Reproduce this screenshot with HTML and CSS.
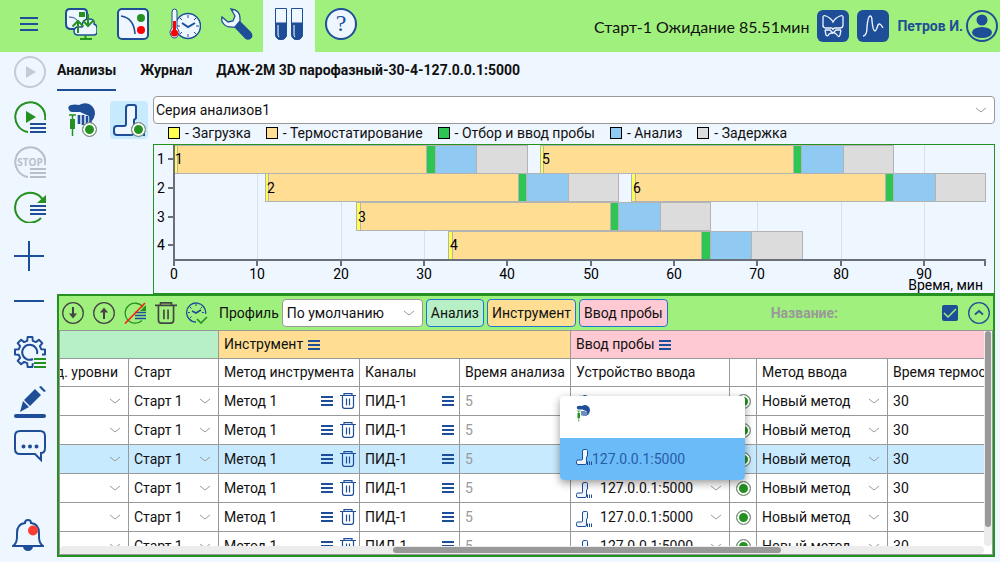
FILE: index.html
```html
<!DOCTYPE html>
<html lang="ru">

<head>
    <meta charset="UTF-8">
    <meta name="viewport" content="width=device-width, initial-scale=1.0">
    <title>Анализы</title>
    <link rel="stylesheet" href="styles.css">
</head>

<body>
    <svg class="sprite" aria-hidden="true">
        <symbol id="i-lines" viewBox="0 0 12 12">
            <path d="M0 2h12M0 6h12M0 10h12" stroke="currentColor" stroke-width="2" />
        </symbol>
        <symbol id="i-trash" viewBox="0 0 16 16">
            <path d="M0 2.500h16M4 2V.6h8V2M2.500 3v10q0 2.400 2 2.400h7q2 0 2-2.400V3M6.500 5.500v7M9.500 5.500v7" fill="none" stroke="currentColor" stroke-width="1.200" />
        </symbol>
        <symbol id="i-tower" viewBox="0 0 32 32">
            <path d="M13 20V4q0-3 3-3h5q2 0 2 2v11l-2 2v12q0 3-3 3H4q-3 0-3-3v-3q0-3 3-3h7q2 0 2-2z" fill="#eef6ff" stroke="#1f4e98" stroke-width="2" />
            <path d="M23 25v7M27 25v7M31 25v7" stroke="#1f4e98" stroke-width="2" />
        </symbol>
        <symbol id="i-hand" viewBox="0 0 30 34">
            <path d="M1 7q-2-4 2-5 4-1 8 0 5-3 10-1 6 3 6 10-1 5-3 7l-3-5-9-4H4q-2 0-3-2z" fill="#1f4e98" />
            <path d="M11 12v9M15 12v10M19 13v9M22.500 13v7" stroke="#1f4e98" stroke-width="2.600" />
            <path d="M1 12h7M4.500 12v4M4.500 25v8" stroke="#259121" stroke-width="1.500" />
            <path d="M2 16h5v10H2z" fill="#259121" />
        </symbol>
    </svg>

    <header class="topbar">
        <nav class="modes">
            <button class="mode" aria-label="Меню">
                <svg viewBox="0 0 32 32"><path d="M7 10h18M7 16h18M7 22h18" stroke="#1f4e98" stroke-width="2" /></svg>
            </button>
            <button class="mode" aria-label="Обмен">
                <svg viewBox="0 0 32 32" fill="none" stroke="#1f4e98" stroke-width="2">
                    <path d="M5 1h13q4 0 4 4v14q0 2-3 2H6q-5 0-5-5V5q0-4 4-4z" fill="#eef6ff" />
                    <path d="M4 9q7 0 9 5" stroke-width="1" />
                    <path d="M12 19h5q0-8 7-8 6 0 5 5 3 1 3 4v4q0 3-4 3H13q-4 0-4-4 0-3 3-4z" fill="#eef6ff" stroke-width="1.500" />
                    <path d="M14 4h6v5h-6z" fill="#259121" stroke="none" />
                    <path d="M13 25V13M7.500 18.500L13 13l5.500 5.500M23 6v12M18 12.500l5 5.500 5.500-5.500M20.500 27v4M15 31h12" stroke="#259121" />
                </svg>
            </button>
            <button class="mode" aria-label="Хроматограф">
                <svg viewBox="0 0 32 32">
                    <rect x="1" y="1" width="30" height="30" rx="4" fill="#eef6ff" stroke="#1f4e98" stroke-width="2" />
                    <path d="M4 8q13 2 14 18" fill="none" stroke="#1f4e98" stroke-width="1.600" />
                    <circle cx="24" cy="10" r="4" fill="#259121" /><circle cx="24" cy="22" r="4" fill="#f00" />
                </svg>
            </button>
            <button class="mode" aria-label="Температура">
                <svg viewBox="0 0 32 32" fill="none" stroke="#1f4e98">
                    <circle cx="19" cy="18" r="12.500" fill="#eef6ff" stroke-width="1.500" />
                    <path d="M19 7v3M19 26v3M8 18h3M27 18h3M11 10l2 2M27 10l-2 2M11 26l2-2M27 26l-2-2" />
                    <path d="M13 15l6 4 7-4" stroke-width="2" />
                    <path d="M3 20V4q0-3 2.500-3T8 4v16q2 2 2 4.500Q9 30 5.500 30T1 24.500Q1 22 3 20z" fill="#eef6ff" />
                    <circle cx="5.500" cy="25" r="3.500" fill="#f00" stroke="none" /><path d="M5.500 13v12" stroke="#f00" stroke-width="3" />
                </svg>
            </button>
            <button class="mode" aria-label="Настройка">
                <svg viewBox="0 0 32 32">
                    <path d="M19 13l11 11q3 4 0 6.500-3 2.500-6 0L13 19z" fill="#1f4e98" />
                    <path d="M10 1q9 1 9 9v3l-5 6q-9 1-12-4-2-2-1-6l6 5 5-1 2-5z" fill="#eef6ff" stroke="#1f4e98" stroke-width="1.300" />
                </svg>
            </button>
            <button class="mode mode-active" aria-label="Анализы">
                <svg viewBox="0 0 32 32" fill="#1f4e98" stroke="#1f4e98">
                    <path d="M2.500.5h11v25q0 6-5.500 6t-5.500-6zM18.500.5h11v25q0 6-5.500 6t-5.500-6z" fill="#eef6ff" />
                    <path d="M2.500 15h11v10.500q0 6-5.500 6t-5.500-6zM18.500 15h11v10.500q0 6-5.500 6t-5.500-6z" />
                    <path d="M5 17v9q0 2 1 3M21 17v9q0 2 1 3" fill="none" stroke="#fff" />
                </svg>
            </button>
            <button class="mode" aria-label="Справка">
                <svg viewBox="0 0 32 32">
                    <circle cx="16" cy="16" r="15" fill="#eef6ff" stroke="#1f4e98" stroke-width="2" />
                    <text class="help-mark" x="16" y="23" text-anchor="middle">?</text>
                </svg>
            </button>
        </nav>
        <span class="state">Старт-1 Ожидание 85.51мин</span>
        <button class="square" aria-label="Сигналы">
            <svg viewBox="0 0 32 32" fill="none" stroke="#eef6ff" stroke-width="1.300">
                <path d="M6 17V7q0-2 3-1 5 2 7 6 2-4 7-6 3-1 3 1v8q0 3-3 3h-5q-2 0-2 2 0-2-2-2H9q-3 0-3-3M8 20h5l3 3 3-3h5M8 20l1 5q2 2 3-1 4-2 4-1 2-1 4 2t3 0l1-5" />
            </svg>
        </button>
        <button class="square" aria-label="Хроматограмма">
            <svg viewBox="0 0 32 32" fill="none" stroke="#eef6ff" stroke-width="1.400"><path d="M6 26q4 0 4-9 1-11 3-11 2 0 2 5 1 10 3 10 1 0 3-6 2-3 5 3" /></svg>
        </button>
        <a class="user" href="#">Петров И.
            <svg viewBox="0 0 32 32"><circle cx="16" cy="16" r="15" fill="none" stroke="#1f4e98" stroke-width="2" /><circle cx="16" cy="10" r="5.500" fill="#1f4e98" /><ellipse cx="16" cy="22.500" rx="10" ry="5.500" fill="#1f4e98" /></svg>
        </a>
    </header>

    <div class="layout">
        <aside class="side">
            <button aria-label="Старт" disabled>
                <svg viewBox="0 0 32 32"><circle cx="16" cy="16" r="15" fill="none" stroke="#c5cad3" stroke-width="2" /><path d="M12 10l10 6-10 6z" fill="#c5cad3" /></svg>
            </button>
            <button aria-label="Старт серии">
                <svg viewBox="0 0 32 32"><path d="M14 31A15 15 0 1 1 31 19" fill="none" stroke="#259121" stroke-width="2" /><path d="M12 10l10 6-10 6z" fill="#259121" /><path d="M16 23h16M16 27h16M16 31h16" stroke="#1f4e98" stroke-width="2" /></svg>
            </button>
            <button aria-label="Стоп серии" disabled>
                <svg viewBox="0 0 32 32"><path d="M14 31A15 15 0 1 1 31 19" fill="none" stroke="#b9bfc9" stroke-width="2" /><text class="stop-text" x="16" y="20" text-anchor="middle">STOP</text><path d="M16 23h16M16 27h16M16 31h16" stroke="#b9bfc9" stroke-width="2" /></svg>
            </button>
            <button aria-label="Повтор серии">
                <svg viewBox="0 0 32 32"><path d="M27 27A15 15 0 1 1 29 9" fill="none" stroke="#259121" stroke-width="2" /><path d="M32 4v8h-9z" fill="#259121" /><path d="M16 15h16M16 19h16M16 23h16" stroke="#1f4e98" stroke-width="2" /></svg>
            </button>
            <button class="after-run" aria-label="Добавить">
                <svg viewBox="0 0 32 32"><path d="M0 16h30M15 1v30" stroke="#1f4e98" stroke-width="2" /></svg>
            </button>
            <button aria-label="Удалить">
                <svg viewBox="0 0 32 32"><path d="M0 16h30" stroke="#1f4e98" stroke-width="2" /></svg>
            </button>
            <button class="after-edit" aria-label="Параметры">
                <svg viewBox="0 0 32 32" fill="none" stroke="#1f4e98" stroke-width="2" stroke-linejoin="round">
                    <path d="M18.800 27.200L18.400 31h-4.800l-.4-3.800-3.100-1.300-3 2.400-3.400-3.400 2.400-3-1.300-3.100L1 18.400v-4.800l3.800-.4 1.300-3.100-2.400-3 3.400-3.400 3 2.400 3.100-1.300.4-3.800h4.800l.4 3.800 3.100 1.300 3-2.400 3.400 3.400-2.400 3 1.300 3.100 3.800.4v4.800h-3" />
                    <path d="M19 23a7.500 7.500 0 1 1 4-5" /><path d="M20 23h12M20 27h12M20 31h12" stroke="#259121" />
                </svg>
            </button>
            <button class="pencil" aria-label="Правка">
                <svg viewBox="0 0 32 32" fill="#1f4e98"><path d="M10 14L21 3l6 6-11 11zM9 15l6 6-9 5zM25 1l2-1 5 5-2 1z" /><path d="M2 30h28" stroke="#1f4e98" stroke-width="4" stroke-linecap="round" /></svg>
            </button>
            <button class="chat" aria-label="Сообщения">
                <svg viewBox="0 0 32 32" fill="none" stroke="#1f4e98" stroke-width="2"><path d="M6 1h20q5 0 5 5v12q0 5-4 5v7l-6-6H6q-5 0-5-5V6q0-5 5-5z" /><path d="M9.500 16.500h0M16 16.500h0M22.500 16.500h0" stroke-width="4" stroke-linecap="round" /></svg>
            </button>
            <button class="bell" aria-label="Уведомления">
                <svg viewBox="0 0 32 32"><path d="M1 27q4-3 4-9v-4q0-9 8-10 0-3 3-3t3 3q8 1 8 10v4q0 6 4 9z" fill="none" stroke="#1f4e98" stroke-width="2" /><path d="M11 28h10q-1 4-5 4t-5-4z" fill="#1f4e98" /><circle cx="21" cy="11.500" r="5" fill="#fb3e33" /></svg>
            </button>
        </aside>

        <main class="content">
            <nav class="tabs">
                <a class="tab tab-active" href="#">Анализы</a>
                <a class="tab" href="#">Журнал</a>
                <a class="tab" href="#">ДАЖ-2М 3D парофазный-30-4-127.0.0.1:5000</a>
            </nav>

            <section class="series">
                <div class="devices">
                    <button class="device" aria-label="Ручной ввод"><svg class="hand" viewBox="0 0 30 34"><use href="#i-hand" /></svg><span class="dot device-dot"></span></button>
                    <button class="device device-active" aria-label="Парофазный дозатор"><svg viewBox="0 0 32 32"><use href="#i-tower" /></svg><span class="dot device-dot"></span></button>
                </div>
                <div class="plan">
                    <select class="series-select" aria-label="Серия"><option>Серия анализов1</option></select>
                    <ul class="legend">
                        <li><i class="swatch load"></i>- Загрузка</li>
                        <li><i class="swatch thermo"></i>- Термостатирование</li>
                        <li><i class="swatch inject"></i>- Отбор и ввод пробы</li>
                        <li><i class="swatch analysis"></i>- Анализ</li>
                        <li><i class="swatch delay"></i>- Задержка</li>
                    </ul>
                    <svg class="chart" id="chart"></svg>
                </div>
            </section>

            <section class="panel">
                <div class="toolbar">
                    <button class="tool" aria-label="Вниз"><svg viewBox="0 0 22 22" fill="none" stroke="#444"><circle cx="11" cy="11" r="10.300" stroke-width="1.300" /><path d="M11 5v9" stroke-width="2" /><path d="M7 11.500h8l-4 5z" fill="#444" stroke="none" /></svg></button>
                    <button class="tool" aria-label="Вверх"><svg viewBox="0 0 22 22" fill="none" stroke="#444"><circle cx="11" cy="11" r="10.300" stroke-width="1.300" /><path d="M11 8v9" stroke-width="2" /><path d="M7 10.500h8l-4-5z" fill="#444" stroke="none" /></svg></button>
                    <button class="tool" aria-label="Отменить повтор"><svg viewBox="0 0 22 22" fill="none"><path d="M18 18.500A10 10 0 1 1 19 5" stroke="#259121" stroke-width="1.300" /><path d="M22 3v6h-6z" fill="#259121" /><path d="M11 10.500h11M11 13.500h11M11 16.500h11" stroke="#1f4e98" stroke-width="1.500" /><path d="M1 21.500L21 1" stroke="#f21" stroke-width="1.700" /></svg></button>
                    <button class="tool dark" aria-label="Удалить"><svg viewBox="0 0 16 16"><use href="#i-trash" /></svg></button>
                    <button class="tool" aria-label="Время"><svg viewBox="0 0 22 22" fill="none" stroke="#1f4e98"><path d="M10 20A9.500 9.500 0 1 1 19.500 12" stroke-width="1.300" /><path d="M10 2v2M2 10.500h2M16 10.500h2M4 5l1.500 1.500M16 5l-1.500 1.500M4 16l1.500-1.500" /><path d="M6 9l4 2 5-3" stroke-width="1.700" /><path d="M11 17l4 4 6-6" stroke="#259121" stroke-width="1.700" /></svg></button>
                    <label class="profile" for="profile">Профиль</label>
                    <select class="profile-select" id="profile"><option>По умолчанию</option></select>
                    <button class="chip analysis-chip">Анализ</button>
                    <button class="chip tool-chip">Инструмент</button>
                    <button class="chip inject-chip">Ввод пробы</button>
                    <label class="name-label" for="name">Название:</label>
                    <input class="name-input" id="name" type="text">
                    <input class="check" type="checkbox" aria-label="Показать" checked>
                    <button class="tool fold" aria-label="Свернуть"><svg viewBox="0 0 22 22" fill="none" stroke="#1f4e98"><circle cx="11" cy="11" r="10.300" stroke-width="1.300" /><path d="M7 12.500l4-3.500 4 3.500" stroke-width="1.700" /></svg></button>
                </div>
                <div class="grid">
                    <div class="viewport">
                        <table>
                            <colgroup>
                                <col class="c-level"><col class="c-start"><col class="c-method"><col class="c-channel"><col class="c-time"><col class="c-device"><col class="c-ready"><col class="c-input"><col class="c-rest">
                            </colgroup>
                            <thead>
                                <tr>
                                    <th class="g-analysis" colspan="2"></th>
                                    <th class="g-tool" colspan="3">Инструмент <svg class="lines"><use href="#i-lines" /></svg></th>
                                    <th class="g-inject" colspan="4">Ввод пробы <svg class="lines"><use href="#i-lines" /></svg></th>
                                </tr>
                                <tr>
                                    <th><div class="level-title">Град. уровни</div></th>
                                    <th>Старт</th>
                                    <th>Метод инструмента</th>
                                    <th>Каналы</th>
                                    <th>Время анализа</th>
                                    <th>Устройство ввода</th>
                                    <th></th>
                                    <th>Метод ввода</th>
                                    <th>Время термостатирования</th>
                                </tr>
                            </thead>
                            <tbody id="rows"></tbody>
                        </table>
                    </div>
                    <div class="vbar"><div class="vthumb"></div></div>
                    <div class="hbar"><div class="hthumb"></div></div>
                </div>
                <ul class="menu">
                    <li><button aria-label="Ручной ввод"><svg class="menu-hand" viewBox="0 0 30 34"><use href="#i-hand" /></svg></button></li>
                    <li><button class="chosen"><svg class="menu-tower" viewBox="0 0 32 32"><use href="#i-tower" /></svg>127.0.0.1:5000</button></li>
                </ul>
            </section>
        </main>
    </div>
    <script src="script.js"></script>
</body>

</html>
```

FILE: styles.css
```css
* {
    box-sizing: border-box;
}

body {
    margin: 0;
    height: 100vh;
    display: flex;
    flex-direction: column;
    overflow: hidden;
    background-color: #eef6ff;
    color: #111;
    font-family: Roboto, sans-serif;
    font-size: 14px;
}

button, select, input {
    font: inherit;
    color: inherit;
    margin: 0;
}
button {
    padding: 0;
    border: none;
    background: none;
    cursor: pointer;
}
a {
    color: inherit;
    text-decoration: none;
}
ul {
    list-style: none;
    margin: 0;
    padding: 0;
}
svg {
    display: block;
    flex-shrink: 0;
}
.sprite {
    position: absolute;
    width: 0;
    height: 0;
}

select {
    appearance: none;
    border: 1px solid #999;
    border-radius: 4px;
    background: #fff url("data:image/svg+xml,%3Csvg xmlns='http://www.w3.org/2000/svg' width='12' height='6'%3E%3Cpath d='M1 1l5 4 5-4' fill='none' stroke='%23999'/%3E%3C/svg%3E") no-repeat right 7px center;
}

/* header */
.topbar {
    display: flex;
    align-items: center;
    height: 52px;
    flex-shrink: 0;
    padding: 0 2px 0 3px;
    background-color: #a0f07d;
}
.modes {
    display: flex;
    margin-right: auto;
}
.mode {
    display: flex;
    align-items: center;
    justify-content: center;
    width: 52px;
    height: 52px;
    padding-bottom: 4px;
}
.mode svg {
    width: 32px;
    height: 32px;
}
.mode-active {
    background-color: #eef6ff;
}
.help-mark {
    font: 24px "Liberation Serif", serif;
    fill: #1f4e98;
}
.state {
    font-family: Lato, sans-serif;
    font-size: 16px;
    margin-right: 8px;
}
.square {
    width: 32px;
    height: 32px;
    border-radius: 6px;
    margin-right: 8px;
    background-color: #1f4e98;
}
.user {
    display: flex;
    align-items: center;
    gap: 3px;
    color: #1f4e98;
    font-weight: bold;
}
.user svg {
    width: 32px;
    height: 32px;
}

.layout {
    display: flex;
    flex: 1;
    min-height: 0;
}

/* left buttons */
.side {
    display: flex;
    flex-direction: column;
    align-items: center;
    gap: 13px;
    width: 57px;
    padding: 4px 0 11px 3px;
}
.side button {
    width: 32px;
    height: 32px;
}
.side svg {
    width: 32px;
    height: 32px;
}
.side .after-run {
    margin-top: 4px;
}
.side .after-edit {
    margin-top: 6px;
}
.side .pencil {
    margin-top: 5px;
}
.side .chat {
    margin-top: -1px;
}
.side .bell {
    margin: auto 4px 0 0;
}
.stop-text {
    font: bold 10px "Open Sans", sans-serif;
    fill: #b9bfc9;
}

.content {
    display: flex;
    flex-direction: column;
    flex: 1;
    min-width: 0;
    padding: 0 5px 5px 0;
}

.tabs {
    display: flex;
    gap: 24px;
    height: 39px;
    flex-shrink: 0;
    font-weight: bold;
}
.tab {
    line-height: 36px;
    border-bottom: 2px solid transparent;
}
.tab-active {
    border-color: #1f4e98;
}

/* series plan */
.series {
    display: flex;
    padding-top: 5px;
}
.devices {
    display: flex;
    gap: 15px;
    width: 96px;
    padding-top: 5px;
    flex-shrink: 0;
}
.device {
    position: relative;
    display: flex;
    align-items: center;
    justify-content: center;
    width: 38px;
    height: 38px;
    border-radius: 4px;
}
.device svg {
    width: 32px;
    height: 32px;
}
.device .hand {
    width: 30px;
    height: 34px;
    margin-left: 14px;
}
.device-active {
    background-color: #c8eafe;
}
.dot {
    display: block;
    width: 15px;
    height: 15px;
    border: 1px solid #888;
    border-radius: 50%;
    background-color: #259121;
    box-shadow: inset 0 0 0 2px #fff;
}
.device-dot {
    position: absolute;
    right: 2px;
    bottom: 2px;
    box-shadow: inset 0 0 0 2px #fff;
}
.device:first-child .device-dot {
    right: -2px;
}
.plan {
    flex: 1;
    min-width: 0;
}
.series-select {
    display: block;
    width: 100%;
    height: 28px;
    padding: 0 2px;
}
.legend {
    display: flex;
    gap: 15px;
    height: 20px;
    padding: 0 0 2px 15px;
}
.legend li {
    display: flex;
    align-items: center;
    gap: 5px;
}
.swatch {
    width: 12px;
    height: 12px;
    border: 1px solid #000;
}
.load { background-color: #ffff4d; fill: #ffff4d; }
.thermo { background-color: #ffde94; fill: #ffde94; }
.inject { background-color: #2dc653; fill: #2dc653; }
.analysis { background-color: #90caf3; fill: #90caf3; }
.delay { background-color: #dcdcdc; fill: #dcdcdc; }

.chart {
    width: 100%;
    height: 150px;
    border: 1px solid #259121;
}
.chart rect {
    stroke: #b3b3b3;
}
.chart .gridline {
    stroke: #d9e0e9;
}
.chart .axis {
    fill: none;
    stroke: #6b7078;
    stroke-width: 2;
}

/* analyses table */
.panel {
    position: relative;
    display: flex;
    flex-direction: column;
    flex: 1;
    min-height: 0;
    border: 2px solid #259121;
}
.toolbar {
    display: flex;
    align-items: center;
    height: 34px;
    flex-shrink: 0;
    padding: 0 3px;
    background-color: #a0f07d;
}
.tool {
    width: 22px;
    height: 22px;
    margin-right: 9px;
}
.dark {
    color: #444;
}
.profile {
    margin: 0 3px 0 2px;
}
.profile-select {
    width: 141px;
    height: 28px;
    padding: 0 4px;
}
.chip {
    height: 28px;
    margin-left: 3px;
    padding: 0 4px;
    border: 1px solid #1976d2;
    border-radius: 4px;
}
.analysis-chip, .g-analysis { background-color: #b7f0c6; }
.tool-chip, .g-tool { background-color: #ffde94; }
.inject-chip, .g-inject { background-color: #ffc9d3; }
.name-label {
    margin-left: auto;
    color: #999;
    font-weight: bold;
}
.name-input {
    width: 104px;
    border: none;
    background: none;
    outline: none;
}
.check {
    appearance: none;
    width: 16px;
    height: 16px;
    margin-right: 10px;
    border-radius: 2px;
    background: #1f4e98 url("data:image/svg+xml,%3Csvg xmlns='http://www.w3.org/2000/svg' width='16' height='16'%3E%3Cpath d='M2 8l4 4 8-8' fill='none' stroke='%23a0f07d' stroke-width='1.500'/%3E%3C/svg%3E");
}
.fold {
    margin-right: 0;
}

.grid {
    display: grid;
    grid-template-columns: 1fr 8px;
    grid-template-rows: 1fr 8px;
    flex: 1;
    min-height: 0;
    border: 1px solid #999;
    background-color: #fff;
}
.viewport {
    overflow: hidden;
}
table {
    width: 100%;
    table-layout: fixed;
    border-collapse: separate;
    border-spacing: 0;
}
.c-level { width: 69px; }
.c-start { width: 90px; }
.c-method { width: 141px; }
.c-channel { width: 100px; }
.c-time { width: 111px; }
.c-device { width: 159px; }
.c-ready { width: 27px; }
.c-input { width: 131px; }
th, td {
    height: 28px;
    padding: 0 5px;
    border-right: 1px solid #999;
    border-bottom: 1px solid #999;
    font-weight: normal;
    text-align: left;
    white-space: nowrap;
    overflow: hidden;
}
th {
    padding-bottom: 2px;
}
td {
    height: 29px;
}
th:last-child, td:last-child {
    border-right: none;
}
.level-title {
    display: flex;
    justify-content: flex-end;
    padding-right: 5px;
}
td select {
    display: block;
    width: 100%;
    padding: 0;
    border: none;
    background-color: transparent;
    background-position: right 2px center;
}
td input {
    display: block;
    width: 100%;
    padding: 0;
    border: none;
    background: none;
}
td input:disabled {
    color: #999;
}
.lines {
    display: inline-block;
    width: 12px;
    height: 12px;
    margin-left: 1px;
    color: #1f4e98;
    vertical-align: -2px;
}
.cell {
    display: flex;
    align-items: center;
    justify-content: space-between;
}
.cell button {
    color: #1f4e98;
}
.cell .actions {
    display: flex;
    align-items: center;
    gap: 7px;
    margin-right: -2px;
}
.cell .lines {
    display: block;
    margin: 0;
}
.bin {
    width: 16px;
    height: 16px;
}
.pick {
    display: flex;
    align-items: center;
    gap: 8px;
}
.pick svg {
    width: 16px;
    height: 16px;
    margin-top: 4px;
}
td .dot {
    margin: 0 auto;
}
.selected {
    background-color: #c8eafe;
}
.vbar, .hbar {
    border-radius: 4px;
    background-color: #ececec;
}
.vthumb {
    width: 6px;
    height: 91%;
    margin: 0 auto;
    border-radius: 3px;
    background-color: #999;
}
.hthumb {
    width: 42%;
    height: 6px;
    margin: 1px 0 0 36%;
    border-radius: 3px;
    background-color: #999;
}

/* device list that drops over the table */
.menu {
    position: absolute;
    left: 501px;
    top: 100px;
    width: 185px;
    overflow: hidden;
    border-radius: 4px;
    background-color: #fff;
    box-shadow: 0 3px 8px rgba(0, 0, 0, 0.4);
}
.menu button {
    display: flex;
    align-items: center;
    width: 100%;
    height: 42px;
    padding: 0 16px;
    color: #285ba8;
}
.menu .chosen {
    background-color: #6bbbf8;
}
.menu-hand {
    width: 16px;
    height: 17px;
    margin-bottom: 8px;
}
.menu-tower {
    width: 16px;
    height: 16px;
    margin-bottom: 5px;
}
```

FILE: script.js
```js
let rows = document.querySelector('#rows');
let chart = document.querySelector('#chart');

// device of every row, empty means manual input
let devices = ['', '127.0.0.1:5000', '127.0.0.1:5000', '127.0.0.1:5000', '127.0.0.1:5000', '127.0.0.1:5000'];

function tableRows() {
    let str = '';
    devices.forEach((device, i) => {
        let icon = device ? '<svg viewBox="0 0 32 32"><use href="#i-tower"/></svg>' : '<svg viewBox="0 0 30 34"><use href="#i-hand"/></svg>';
        str += `<tr class="${i == 2 ? 'selected' : ''}">
            <td><select aria-label="Уровень"><option></option></select></td>
            <td><select aria-label="Старт"><option>Старт 1</option></select></td>
            <td><div class="cell">Метод 1<span class="actions">
                <button aria-label="Список"><svg class="lines"><use href="#i-lines"/></svg></button>
                <button aria-label="Удалить"><svg class="bin"><use href="#i-trash"/></svg></button></span></div></td>
            <td><div class="cell">ПИД-1<button aria-label="Каналы"><svg class="lines"><use href="#i-lines"/></svg></button></div></td>
            <td><input type="text" value="5" aria-label="Время анализа" disabled></td>
            <td><div class="pick">${icon}
                <select aria-label="Устройство"><option>${device}</option></select></div></td>
            <td><span class="dot"></span></td>
            <td><select aria-label="Метод ввода"><option>Новый метод</option></select></td>
            <td><input type="text" value="30" aria-label="Время термостатирования"></td>
        </tr>`;
    });
    rows.innerHTML = str;
}

// start time and track of every analysis, minutes
let runs = [[0, 0], [11, 1], [22, 2], [33, 3], [44, 0], [55, 1]];
let stages = [['load', 0.45], ['thermo', 29.95], ['inject', 1], ['analysis', 5], ['delay', 6.05]];
let total = 97.45;

function drawChart() {
    let left = 20;
    let bottom = 115;
    let width = chart.clientWidth - left - 8;
    let rowHeight = bottom / 4;
    let x = min => Math.round(left + min / total * width);
    let str = '';
    for (let t = 0; t < total; t += 10) {
        str += `<path class="gridline" d="M${x(t) + 0.5} 0V${bottom}"/>`;
    }
    runs.forEach(([start, track]) => {
        let t = start;
        let y = Math.floor(track * rowHeight) + 0.5;
        stages.forEach(([name, len]) => {
            str += `<rect class="${name}" x="${x(t) - 0.5}" y="${y}" width="${x(t + len) - x(t)}" height="28"/>`;
            t += len;
        });
    });
    runs.forEach(([start, track], i) => {
        str += `<text x="${x(start) + 1}" y="${track * rowHeight + 19}">${i + 1}</text>`;
    });
    str += `<path class="axis" d="M${left} 0V${bottom}H${left + width - 1}v6"/>`;
    for (let t = 0; t < total; t += 10) {
        str += `<path class="axis" d="M${x(t)} ${bottom}v6"/><text x="${x(t)}" y="134" text-anchor="middle">${t}</text>`;
    }
    for (let i = 0; i < 4; i++) {
        let y = Math.round(i * rowHeight + 14);
        str += `<path class="axis" d="M${left - 6} ${y}h6"/><text x="3" y="${y + 5}">${i + 1}</text>`;
    }
    str += `<text x="${left + width - 3}" y="145" text-anchor="end">Время, мин</text>`;
    chart.innerHTML = str;
}

tableRows();
drawChart();
window.addEventListener('resize', drawChart);
```
